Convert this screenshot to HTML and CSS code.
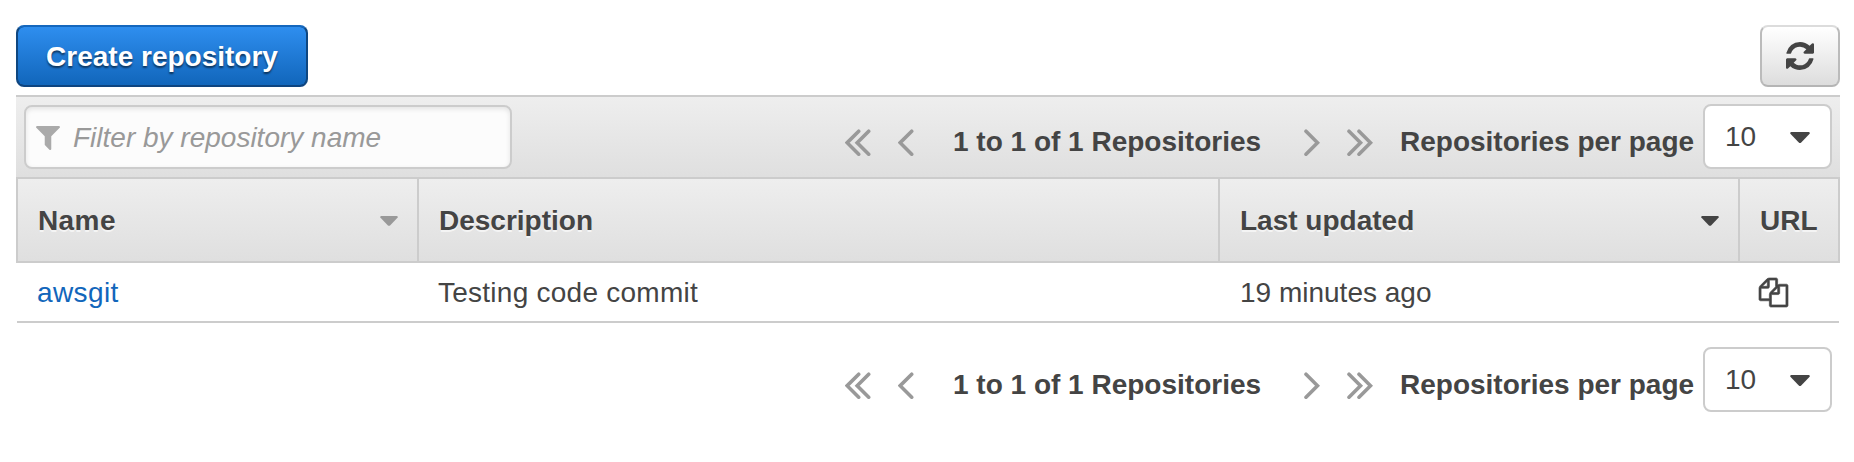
FILE: index.html
```html
<!DOCTYPE html>
<html lang="en">
<head>
<meta charset="utf-8">
<title>Repositories</title>
<link rel="stylesheet" href="styles.css">
</head>
<body>
<svg class="defs" aria-hidden="true">
  <symbol id="prev" viewBox="0 0 16 28"><path class="chevron" d="M13.7 2.2 2.2 13.7l11.5 11.5"/></symbol>
  <symbol id="next" viewBox="0 0 16 28"><path class="chevron" d="M2 2.2l11.5 11.5L2 25.2"/></symbol>
  <symbol id="first" viewBox="0 0 26 28"><path class="chevron" d="M13.7 2.2 2.2 13.7l11.5 11.5M23.7 2.2 12.2 13.7l11.5 11.5"/></symbol>
  <symbol id="last" viewBox="0 0 26 28"><path class="chevron" d="M2 2.2l11.5 11.5L2 25.2M12 2.2l11.5 11.5L12 25.2"/></symbol>
  <symbol id="caret" viewBox="0 0 20 11"><path d="M1.2 0h17.6q1.8.6.6 2l-8.2 8.4q-1.2 1-2.4 0L.6 2Q-.6.6 1.2 0z"/></symbol>
</svg>
<main class="page">
  <div class="actions">
    <button class="btn btn-primary">Create repository</button>
    <button class="btn btn-refresh" aria-label="Refresh">
      <svg class="icon-refresh" viewBox="0 0 1536 1536"><path d="M1511 928q0 5-1 7-64 268-268 434.500t-478 166.500q-146 0-282.500-55t-243.500-157l-129 129q-19 19-45 19t-45-19-19-45v-448q0-26 19-45t45-19h448q26 0 45 19t19 45-19 45l-137 137q71 66 161 102t187 36q134 0 250-65t186-179q11-17 53-117 8-23 30-23h192q13 0 22.500 9.500t9.500 22.500zm25-800v448q0 26-19 45t-45 19h-448q-26 0-45-19t-19-45 19-45l138-138q-148-137-349-137-134 0-250 65t-186 179q-11 17-53 117-8 23-30 23h-199q-13 0-22.500-9.500t-9.500-22.500v-7q65-268 270-434.500t480-166.500q146 0 284 55.500t245 156.500l130-129q19-19 45-19t45 19 19 45z"/></svg>
    </button>
  </div>

  <div class="toolbar">
    <div class="filter">
      <svg class="icon-filter" viewBox="0 0 1408 1408"><path d="M1403 39q17 41-14 70l-493 493v742q0 42-39 59-13 5-25 5-27 0-45-19l-256-256q-19-19-19-45v-486l-493-493q-31-29-14-70 17-39 59-39h1280q42 0 59 39z"/></svg>
      <span>Filter by repository name</span>
    </div>
    <div class="pager">
      <div class="pager-nav">
        <svg class="double"><use href="#first"/></svg>
        <svg class="single prev"><use href="#prev"/></svg>
        <span class="range">1 to 1 of 1 Repositories</span>
        <svg class="single next"><use href="#next"/></svg>
        <svg class="double"><use href="#last"/></svg>
        <span class="per-page">Repositories per page</span>
      </div>
      <div class="select"><span>10</span><svg class="select-caret"><use href="#caret"/></svg></div>
    </div>
  </div>

  <div class="table">
    <div class="row head">
      <div class="cell"><span class="name">Name</span><svg class="sort muted" viewBox="0 0 20 11"><use href="#caret" width="20" height="11"/></svg></div>
      <div class="cell">Description</div>
      <div class="cell">Last updated<svg class="sort" viewBox="0 0 20 11"><use href="#caret" width="20" height="11"/></svg></div>
      <div class="cell">URL</div>
    </div>
    <div class="row body">
      <div class="cell text"><a class="link">awsgit</a></div>
      <div class="cell text description">Testing code commit</div>
      <div class="cell text updated">19 minutes ago</div>
      <div class="cell"><svg class="icon-copy" viewBox="0 0 1792 1792"><path d="M1696 384q40 0 68 28t28 68v1216q0 40-28 68t-68 28h-960q-40 0-68-28t-28-68v-288h-544q-40 0-68-28t-28-68v-672q0-40 20-88t48-76l408-408q28-28 76-48t88-20h416q40 0 68 28t28 68v328q68-40 128-40h416zm-544 213l-299 299h299v-299zm-640-384l-299 299h299v-299zm196 647l316-316v-416h-384v416q0 40-28 68t-68 28h-416v640h512v-256q0-40 20-88t48-76zm956 804v-1152h-384v416q0 40-28 68t-68 28h-416v640h896z"/></svg></div>
    </div>
  </div>

  <div class="footer">
    <div class="pager">
      <div class="pager-nav">
        <svg class="double"><use href="#first"/></svg>
        <svg class="single prev"><use href="#prev"/></svg>
        <span class="range">1 to 1 of 1 Repositories</span>
        <svg class="single next"><use href="#next"/></svg>
        <svg class="double"><use href="#last"/></svg>
        <span class="per-page">Repositories per page</span>
      </div>
      <div class="select"><span>10</span><svg class="select-caret"><use href="#caret"/></svg></div>
    </div>
  </div>
</main>
</body>
</html>
```
FILE: styles.css
```css
* { box-sizing: border-box; }
body {
  margin: 0;
  background: #fff;
  color: #444;
  font: 28px/32px "Liberation Sans", Arial, sans-serif;
}
svg { display: block; flex: none; fill: currentColor; }
.defs { position: absolute; width: 0; height: 0; }
.page { padding: 25px 14px 0 16px; }

.actions { display: flex; justify-content: space-between; margin-bottom: 8px; }
.btn {
  display: flex;
  align-items: center;
  justify-content: center;
  height: 62px;
  padding: 0;
  border: 2px solid;
  border-radius: 8px;
  font: inherit;
  color: #444;
}
.btn-primary {
  width: 292px;
  padding-top: 1px;
  border-color: #1567bd #0f4780 #0d4480;
  background: linear-gradient(#2e8eef, #1166bb) padding-box, #0f4780;
  color: #fff;
  font-weight: bold;
  text-shadow: 0 2px 2px rgba(0, 0, 0, .55);
}
.btn-refresh {
  width: 80px;
  border-color: #dcdcdc #bbb #b5b5b5;
  background: linear-gradient(#fff, #ddd);
}
.icon-refresh { width: 28px; height: 28px; }

.toolbar {
  display: flex;
  justify-content: space-between;
  height: 82px;
  padding: 7px 8px 0;
  border-top: 2px solid #ccc;
  background: linear-gradient(#eee, #dfdfdf);
}
.filter {
  display: flex;
  align-items: center;
  gap: 13px;
  width: 488px;
  height: 64px;
  margin-top: 1px;
  padding: 1px 0 0 10px;
  border: 2px solid #ccc;
  border-radius: 8px;
  background: #fcfcfc;
  box-shadow: inset 0 2px 5px rgba(0, 0, 0, .1);
  color: #999;
  font-style: italic;
}
.icon-filter { width: 24px; height: 24px; fill: #aaa; }

.pager { display: flex; }
.pager-nav {
  display: flex;
  align-items: center;
  height: 65px;
  padding-top: 11px;
  font-weight: bold;
  white-space: nowrap;
}
.chevron { fill: none; stroke: #999; stroke-width: 3.6; stroke-linecap: round; }
.double { width: 26px; height: 28px; margin-top: 1px; }
.single { width: 16px; height: 28px; margin-top: 1px; }
.prev { margin-left: 27px; }
.range { width: 309px; margin-left: 39px; }
.next { margin: 1px 27px 0 42px; }
.per-page { width: 303px; margin-left: 27px; }
.select {
  display: flex;
  align-items: center;
  justify-content: space-between;
  width: 129px;
  height: 65px;
  padding: 1px 20px 0 20px;
  border: 2px solid #ccc;
  border-radius: 8px;
  background: #fff;
}
.select-caret { width: 20px; height: 11px; }

.row { display: grid; grid-template-columns: 401px 801px 520px 102px; }
.cell { display: flex; align-items: center; justify-content: space-between; padding-left: 20px; }
.head {
  height: 86px;
  border: solid #ccc;
  border-width: 2px 0;
  background: linear-gradient(#eee, #dfdfdf);
  font-weight: bold;
  text-shadow: 0 2px 0 rgba(255, 255, 255, .6);
}
.head .cell { padding-top: 1px; padding-right: 19px; border-left: 2px solid #ccc; }
.head .cell:last-child { padding-right: 0; border-right: 2px solid #ccc; }
.name { letter-spacing: .4px; }
.sort { width: 18px; height: 10px; }
.muted { color: #999; }
.body {
  grid-template-columns: 401px 801px 520px 100px;
  height: 60px;
  margin: 0 1px;
  border-bottom: 2px solid #ccc;
}
.text { padding-top: 1px; }
.description { letter-spacing: .25px; }
.updated { padding-left: 21px; }
.link { color: #1166bb; letter-spacing: .4px; }
.icon-copy { width: 29px; height: 29px; stroke: currentColor; stroke-width: 40; overflow: visible; }

.footer { display: flex; justify-content: flex-end; padding: 24px 6px 0 0; }
.footer .pager { margin-right: 2px; }
```
